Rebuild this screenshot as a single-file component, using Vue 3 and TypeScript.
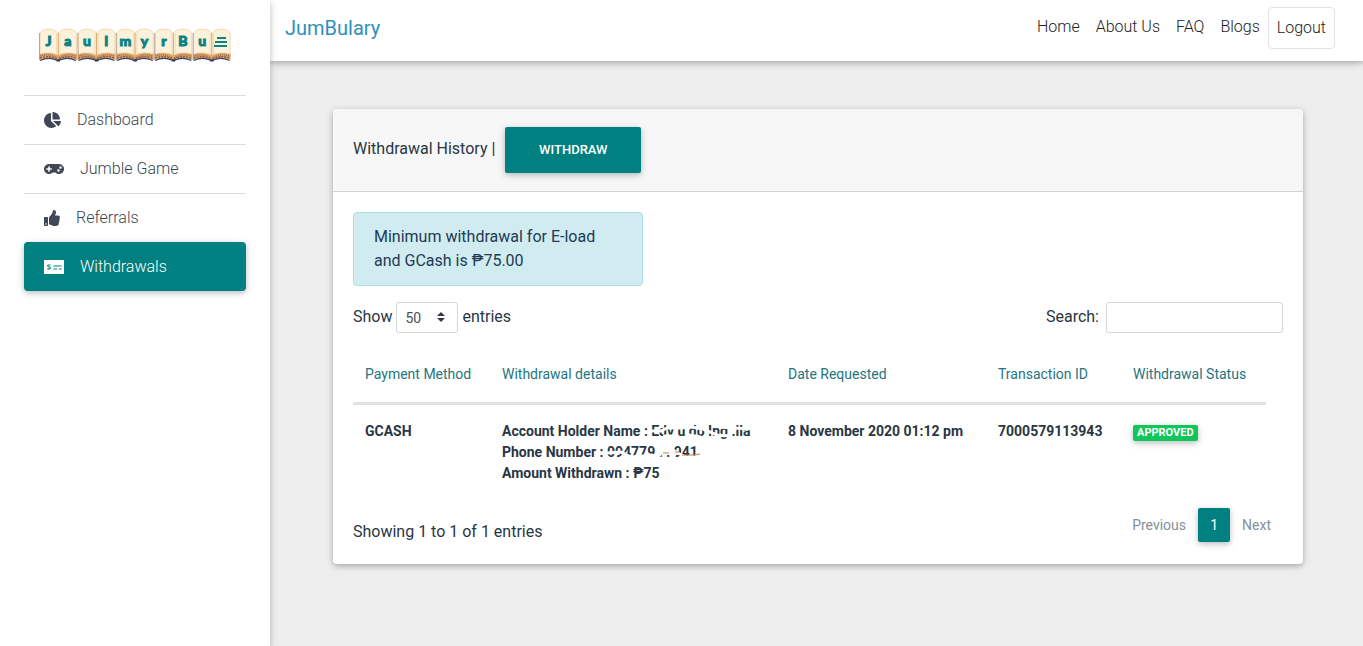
<script setup lang="ts">
import { ref } from 'vue'

interface MenuItem {
  label: string
  width: number
  viewBox: string
  path: string
  active?: boolean
}

const menu: MenuItem[] = [
  {
    label: 'Dashboard',
    width: 17,
    viewBox: '0 0 544 512',
    path: 'M527.79 288H290.5l158.03 158.03c6.04 6.04 15.98 6.53 22.19.68 38.7-36.46 65.32-85.61 73.13-140.86 1.34-9.46-6.51-17.85-16.06-17.85zm-15.83-64.8C503.72 103.74 408.26 8.28 288.8.04 279.68-.59 272 7.1 272 16.24V240h223.77c9.14 0 16.82-7.68 16.19-16.8zM224 288V50.71c0-9.55-8.39-17.4-17.84-16.06C86.99 51.49-4.1 155.6.14 280.37 4.5 408.51 114.83 513.59 243.03 511.98c50.4-.63 96.97-16.87 135.26-44.03 7.9-5.6 8.42-17.23 1.57-24.08L224 288z',
  },
  {
    label: 'Jumble Game',
    width: 20,
    viewBox: '0 0 640 512',
    path: 'M480.07 96H160a160 160 0 1 0 114.24 272h91.5A160 160 0 1 0 480.07 96zM248 268a12 12 0 0 1-12 12h-52v52a12 12 0 0 1-12 12h-24a12 12 0 0 1-12-12v-52H84a12 12 0 0 1-12-12v-24a12 12 0 0 1 12-12h52v-52a12 12 0 0 1 12-12h24a12 12 0 0 1 12 12v52h52a12 12 0 0 1 12 12zm216 76a40 40 0 1 1 40-40 40 40 0 0 1-40 40zm64-96a40 40 0 1 1 40-40 40 40 0 0 1-40 40z',
  },
  {
    label: 'Referrals',
    width: 16,
    viewBox: '0 0 512 512',
    path: 'M104 224H24c-13.255 0-24 10.745-24 24v240c0 13.255 10.745 24 24 24h80c13.255 0 24-10.745 24-24V248c0-13.255-10.745-24-24-24zM64 472c-13.255 0-24-10.745-24-24s10.745-24 24-24 24 10.745 24 24-10.745 24-24 24zM384 81.452c0 42.416-25.97 66.208-33.277 94.548h101.723c33.397 0 59.397 27.746 59.553 58.098.084 17.938-7.546 37.249-19.439 49.197l-.11.11c9.836 23.337 8.237 56.037-9.308 79.469 8.681 25.895-.069 57.704-16.382 74.757 4.298 17.598 2.244 32.575-6.148 44.632C440.202 511.587 389.616 512 346.839 512l-2.845-.001c-48.287-.017-87.806-17.598-119.56-31.725-15.957-7.099-36.821-15.887-52.651-16.178-6.54-.12-11.783-5.457-11.783-11.998v-213.77c0-3.2 1.282-6.271 3.558-8.521 39.614-39.144 56.648-80.587 89.117-113.111 14.804-14.832 20.188-37.236 25.393-58.902C282.515 39.293 291.817 0 312 0c24 0 72 8 72 81.452z',
  },
  {
    label: 'Withdrawals',
    width: 20,
    viewBox: '0 0 640 512',
    path: 'M0 32H640V480H0ZM300 208V240H568V208ZM300 304V336H420V304ZM468 304V336H568V304ZM212 176H146Q100 176 100 219Q100 258 138 265L180 272Q190 274 190 286Q190 298 176 298H104V332H178Q222 332 222 288Q222 248 186 240L146 232Q132 230 132 219Q132 210 144 210H212Z',
    active: true,
  },
]

const letters = ['J', 'a', 'u', 'l', 'm', 'y', 'r', 'B', 'u']
const books = [0, 1, 2, 3, 4]
const links = ['Home', 'About Us', 'FAQ', 'Blogs']
const columns = ['Payment Method', 'Withdrawal details', 'Date Requested', 'Transaction ID', 'Withdrawal Status']

const pageSize = ref('50')
const search = ref('')
</script>

<template>
  <div class="layout">
    <aside class="sidebar">
      <a class="logo" href="#" aria-label="JaulmyrBu">
        <svg viewBox="0 0 192 36" width="192" height="36">
          <g v-for="b in books" :key="b" :transform="`translate(${b * 38.4} 0)`">
            <path d="M.5 25H38V32Q28 29 21 32H17Q10 29 .5 32Z" fill="#d9a566" />
            <path d="M1 28Q10 25 18 30M20 30Q28 25 37 28" fill="none" stroke="#a5673f" stroke-width="1.4" stroke-dasharray="1 1" />
            <path d="M1 30Q10 27 18 31M20 31Q28 27 37 30" fill="none" stroke="#8b5a48" stroke-width="1.4" stroke-dasharray="2 1" />
            <path d="M1 32.500Q10 28.500 17 32H21Q28 28.500 37 32.500" fill="none" stroke="#3a4066" stroke-width="1.200" />
            <path d="M17.500 31.500h3.500v2h-3.500z" fill="#2c3560" />
            <path d="M1 26V5Q3 1 9 1Q16 1 19.200 5Q22 1 28 1Q35 1 37.500 5V26Q28 23 19.200 27Q10 23 1 26Z" fill="#fcf2dc" stroke="#ead2ac" stroke-width=".8" />
            <path d="M19.200 5V28" stroke="#dfae78" stroke-width="1.200" />
            <path d="M17.500 5V26M21 5V26" stroke="#f6e0ba" stroke-width="1.200" />
            <path d="M.5 5V32" stroke="#ab9084" stroke-width=".8" />
          </g>
          <text v-for="(l, i) in letters" :key="i" class="logo-letter" :x="i * 19.2 + 9.6" y="18">{{ l }}</text>
          <path d="M178 10h9M176 14h12M175 18h13" stroke="#0b8382" stroke-width="1.800" />
        </svg>
      </a>
      <nav class="menu">
        <a v-for="item in menu" :key="item.label" href="#" class="menu-item" :class="{ active: item.active }">
          <svg :viewBox="item.viewBox" :width="item.width" height="16" aria-hidden="true">
            <path :d="item.path" fill="currentColor" fill-rule="evenodd" />
          </svg>
          <span>{{ item.label }}</span>
        </a>
      </nav>
    </aside>

    <div class="page">
      <header class="topbar">
        <a class="brand" href="#">JumBulary</a>
        <nav class="links">
          <a v-for="link in links" :key="link" href="#">{{ link }}</a>
          <a class="logout" href="#">Logout</a>
        </nav>
      </header>

      <main class="content">
        <section class="card">
          <div class="card-head">
            <span>Withdrawal History |</span>
            <button class="withdraw" type="button">WITHDRAW</button>
          </div>
          <div class="card-body">
            <div class="notice">Minimum withdrawal for E-load and GCash is ₱75.00</div>

            <div class="tools">
              <label class="tool">
                <span>Show</span>
                <span class="select-wrap">
                  <select v-model="pageSize">
                    <option>10</option>
                    <option>25</option>
                    <option>50</option>
                    <option>100</option>
                  </select>
                  <svg class="caret" viewBox="0 0 8 10" width="8" height="10" aria-hidden="true">
                    <path d="M4 0L8 4H0ZM0 6H8L4 10Z" fill="#343a40" />
                  </svg>
                </span>
                <span>entries</span>
              </label>
              <label class="tool search">
                <span>Search:</span>
                <input v-model="search" type="search" />
              </label>
            </div>

            <table>
              <colgroup>
                <col class="c-method" />
                <col class="c-details" />
                <col class="c-date" />
                <col class="c-id" />
                <col class="c-status" />
              </colgroup>
              <thead>
                <tr>
                  <th v-for="c in columns" :key="c" scope="col">{{ c }}</th>
                </tr>
              </thead>
              <tbody>
                <tr>
                  <td>GCASH</td>
                  <td>
                    <div>
                      Account Holder Name :
                      <span class="hidden-value">Edv u do Ing .lla
                        <svg viewBox="0 0 102 16" width="102" height="16" aria-hidden="true">
                          <path d="M0 8L10 8L16 5L30 5L40 4L52 6L66 12L80 13M68 4L82 5L102 6" />
                          <path d="M12 13L26 13M38 12L50 14" />
                        </svg>
                      </span>
                    </div>
                    <div>
                      Phone Number :
                      <span class="hidden-value">094779 . . 941
                        <svg viewBox="0 0 102 16" width="102" height="16" aria-hidden="true">
                          <path d="M0 9L14 8L24 13L36 12L54 11M52 5L64 5L78 13L94 13" />
                          <path class="trace" d="M56 9h6M68 8h4M75 11h12l6 -1" />
                        </svg>
                      </span>
                    </div>
                    <div>Amount Withdrawn : ₱75</div>
                  </td>
                  <td>8 November 2020 01:12 pm</td>
                  <td>7000579113943</td>
                  <td><span class="badge">APPROVED</span></td>
                </tr>
              </tbody>
            </table>

            <div class="foot">
              <span>Showing 1 to 1 of 1 entries</span>
              <nav class="pager" aria-label="Pages">
                <button type="button">Previous</button>
                <button type="button" class="current">1</button>
                <button type="button">Next</button>
              </nav>
            </div>
          </div>
        </section>
      </main>
    </div>
  </div>
</template>

<style>
body {
  margin: 0;
  background: #eee;
}
</style>

<style scoped>
* {
  box-sizing: border-box;
}

.layout {
  display: flex;
  min-height: 100vh;
  font-family: Roboto, sans-serif;
  font-size: 16px;
  line-height: 24px;
  color: #2a3644;
}

a {
  color: inherit;
  text-decoration: none;
}

button,
select,
input {
  font-family: inherit;
}

.sidebar {
  flex: 0 0 270px;
  padding: 28px 24px;
  background: #fff;
  box-shadow: 0 2px 5px rgba(0, 0, 0, 0.16), 0 2px 10px rgba(0, 0, 0, 0.12);
  z-index: 2;
}

.logo {
  display: flex;
  justify-content: center;
  margin-bottom: 31px;
}

.logo-letter {
  font: 900 14px Lato, sans-serif;
  fill: #0b8382;
  stroke: #0b8382;
  stroke-width: 1px;
  text-anchor: middle;
}

.menu-item {
  display: flex;
  align-items: center;
  gap: 16px;
  height: 49px;
  padding: 0 20px;
  border-top: 1px solid #dcdcdc;
  font-weight: 300;
  color: #37474f;
}

.menu-item svg {
  flex: none;
  color: #404858;
}

.menu-item.active {
  border-color: #008080;
  border-radius: 4px;
  background: #008080;
  color: #fff;
  box-shadow: 0 2px 5px rgba(0, 0, 0, 0.16), 0 2px 10px rgba(0, 0, 0, 0.12);
}

.menu-item.active svg {
  color: #fff;
}

.page {
  flex: 1;
  min-width: 0;
  background: #eee;
}

.topbar {
  display: flex;
  align-items: flex-start;
  justify-content: space-between;
  padding: 7px 28px 12px 15px;
  background: #fff;
  box-shadow: 0 2px 5px rgba(0, 0, 0, 0.2), 0 2px 10px rgba(0, 0, 0, 0.12);
}

.brand {
  padding-top: 6px;
  font-size: 20px;
  line-height: 30px;
  color: #2f8fbd;
}

.links {
  display: flex;
  font-weight: 300;
  color: #222;
}

.links a {
  padding: 8px;
}

.links .logout {
  border: 1px solid #e2e4e6;
  border-radius: 4px;
}

.content {
  padding: 48px 60px 48px 63px;
}

.card {
  border-radius: 4px;
  background: #fff;
  box-shadow: 0 2px 5px rgba(0, 0, 0, 0.2), 0 2px 10px rgba(0, 0, 0, 0.12);
}

.card-head {
  display: flex;
  align-items: center;
  gap: 10px;
  padding: 18px 20px;
  border-bottom: 1px solid #d4d4d4;
  border-radius: 4px 4px 0 0;
  background: #f7f7f7;
}

.card-head span,
.tool > span {
  padding-bottom: 2px;
}

.withdraw {
  width: 136px;
  height: 46px;
  padding: 0 0 2px;
  border: 0;
  border-radius: 2px;
  background: #008080;
  color: #fff;
  font-size: 13px;
  font-weight: 500;
  box-shadow: 0 2px 5px rgba(0, 0, 0, 0.16), 0 2px 10px rgba(0, 0, 0, 0.12);
}

.card-body {
  padding: 20px;
}

.notice {
  width: 290px;
  padding: 12px 20px;
  border: 1px solid #abdde5;
  border-radius: 4px;
  background: #d1ecf1;
  color: #213a55;
}

.tools {
  display: flex;
  justify-content: space-between;
  margin-top: 16px;
}

.tool {
  display: flex;
  align-items: center;
  gap: 4px;
}

.search {
  gap: 7px;
}

.tool > .select-wrap {
  position: relative;
  display: flex;
  padding: 0;
}

select {
  width: 62px;
  height: 31px;
  padding: 0 8px;
  border: 1px solid #d3d7db;
  border-radius: 3px;
  background: #fff;
  color: #495057;
  font-size: 14px;
  appearance: none;
}

.caret {
  position: absolute;
  top: 10px;
  right: 13px;
  pointer-events: none;
}

input {
  width: 177px;
  height: 31px;
  border: 1px solid #d3d7db;
  border-radius: 3px;
  background: #fff;
  font-size: 14px;
}

table {
  width: 98%;
  margin-top: 14px;
  border-collapse: collapse;
  table-layout: fixed;
  font-size: 14px;
  line-height: 21px;
}

.c-method {
  width: 137px;
}

.c-details {
  width: 286px;
}

.c-date {
  width: 210px;
}

.c-id {
  width: 135px;
}

.c-status {
  width: 145px;
}

th {
  padding: 17px 12px;
  border-bottom: 3px solid #e0e1e2;
  color: #257580;
  font-weight: 400;
  text-align: left;
  white-space: nowrap;
}

td {
  padding: 16px 12px;
  font-weight: 700;
  vertical-align: top;
  white-space: nowrap;
}

.hidden-value {
  position: relative;
}

.hidden-value svg {
  position: absolute;
  top: 0;
  left: 0;
  fill: none;
  stroke: #fff;
  stroke-width: 3px;
}

.hidden-value .trace {
  stroke: #c4813d;
  stroke-width: 1px;
}

.badge {
  display: inline-block;
  padding: 0 4px;
  border-radius: 2px;
  background: #0fc65a;
  color: #fff;
  font-size: 11px;
  line-height: 16px;
  box-shadow: 0 2px 5px rgba(0, 0, 0, 0.16), 0 2px 10px rgba(0, 0, 0, 0.12);
}

.foot {
  display: flex;
  align-items: flex-end;
  justify-content: space-between;
  padding-top: 8px;
}

.pager {
  display: flex;
  margin-bottom: 2px;
}

.pager button {
  height: 34px;
  padding: 0 12px;
  border: 0;
  border-radius: 2px;
  background: transparent;
  color: #82929c;
  font-size: 14px;
}

.pager .current {
  width: 32px;
  background: #008080;
  color: #fff;
  box-shadow: 0 2px 5px rgba(0, 0, 0, 0.16), 0 2px 10px rgba(0, 0, 0, 0.12);
}
</style>
